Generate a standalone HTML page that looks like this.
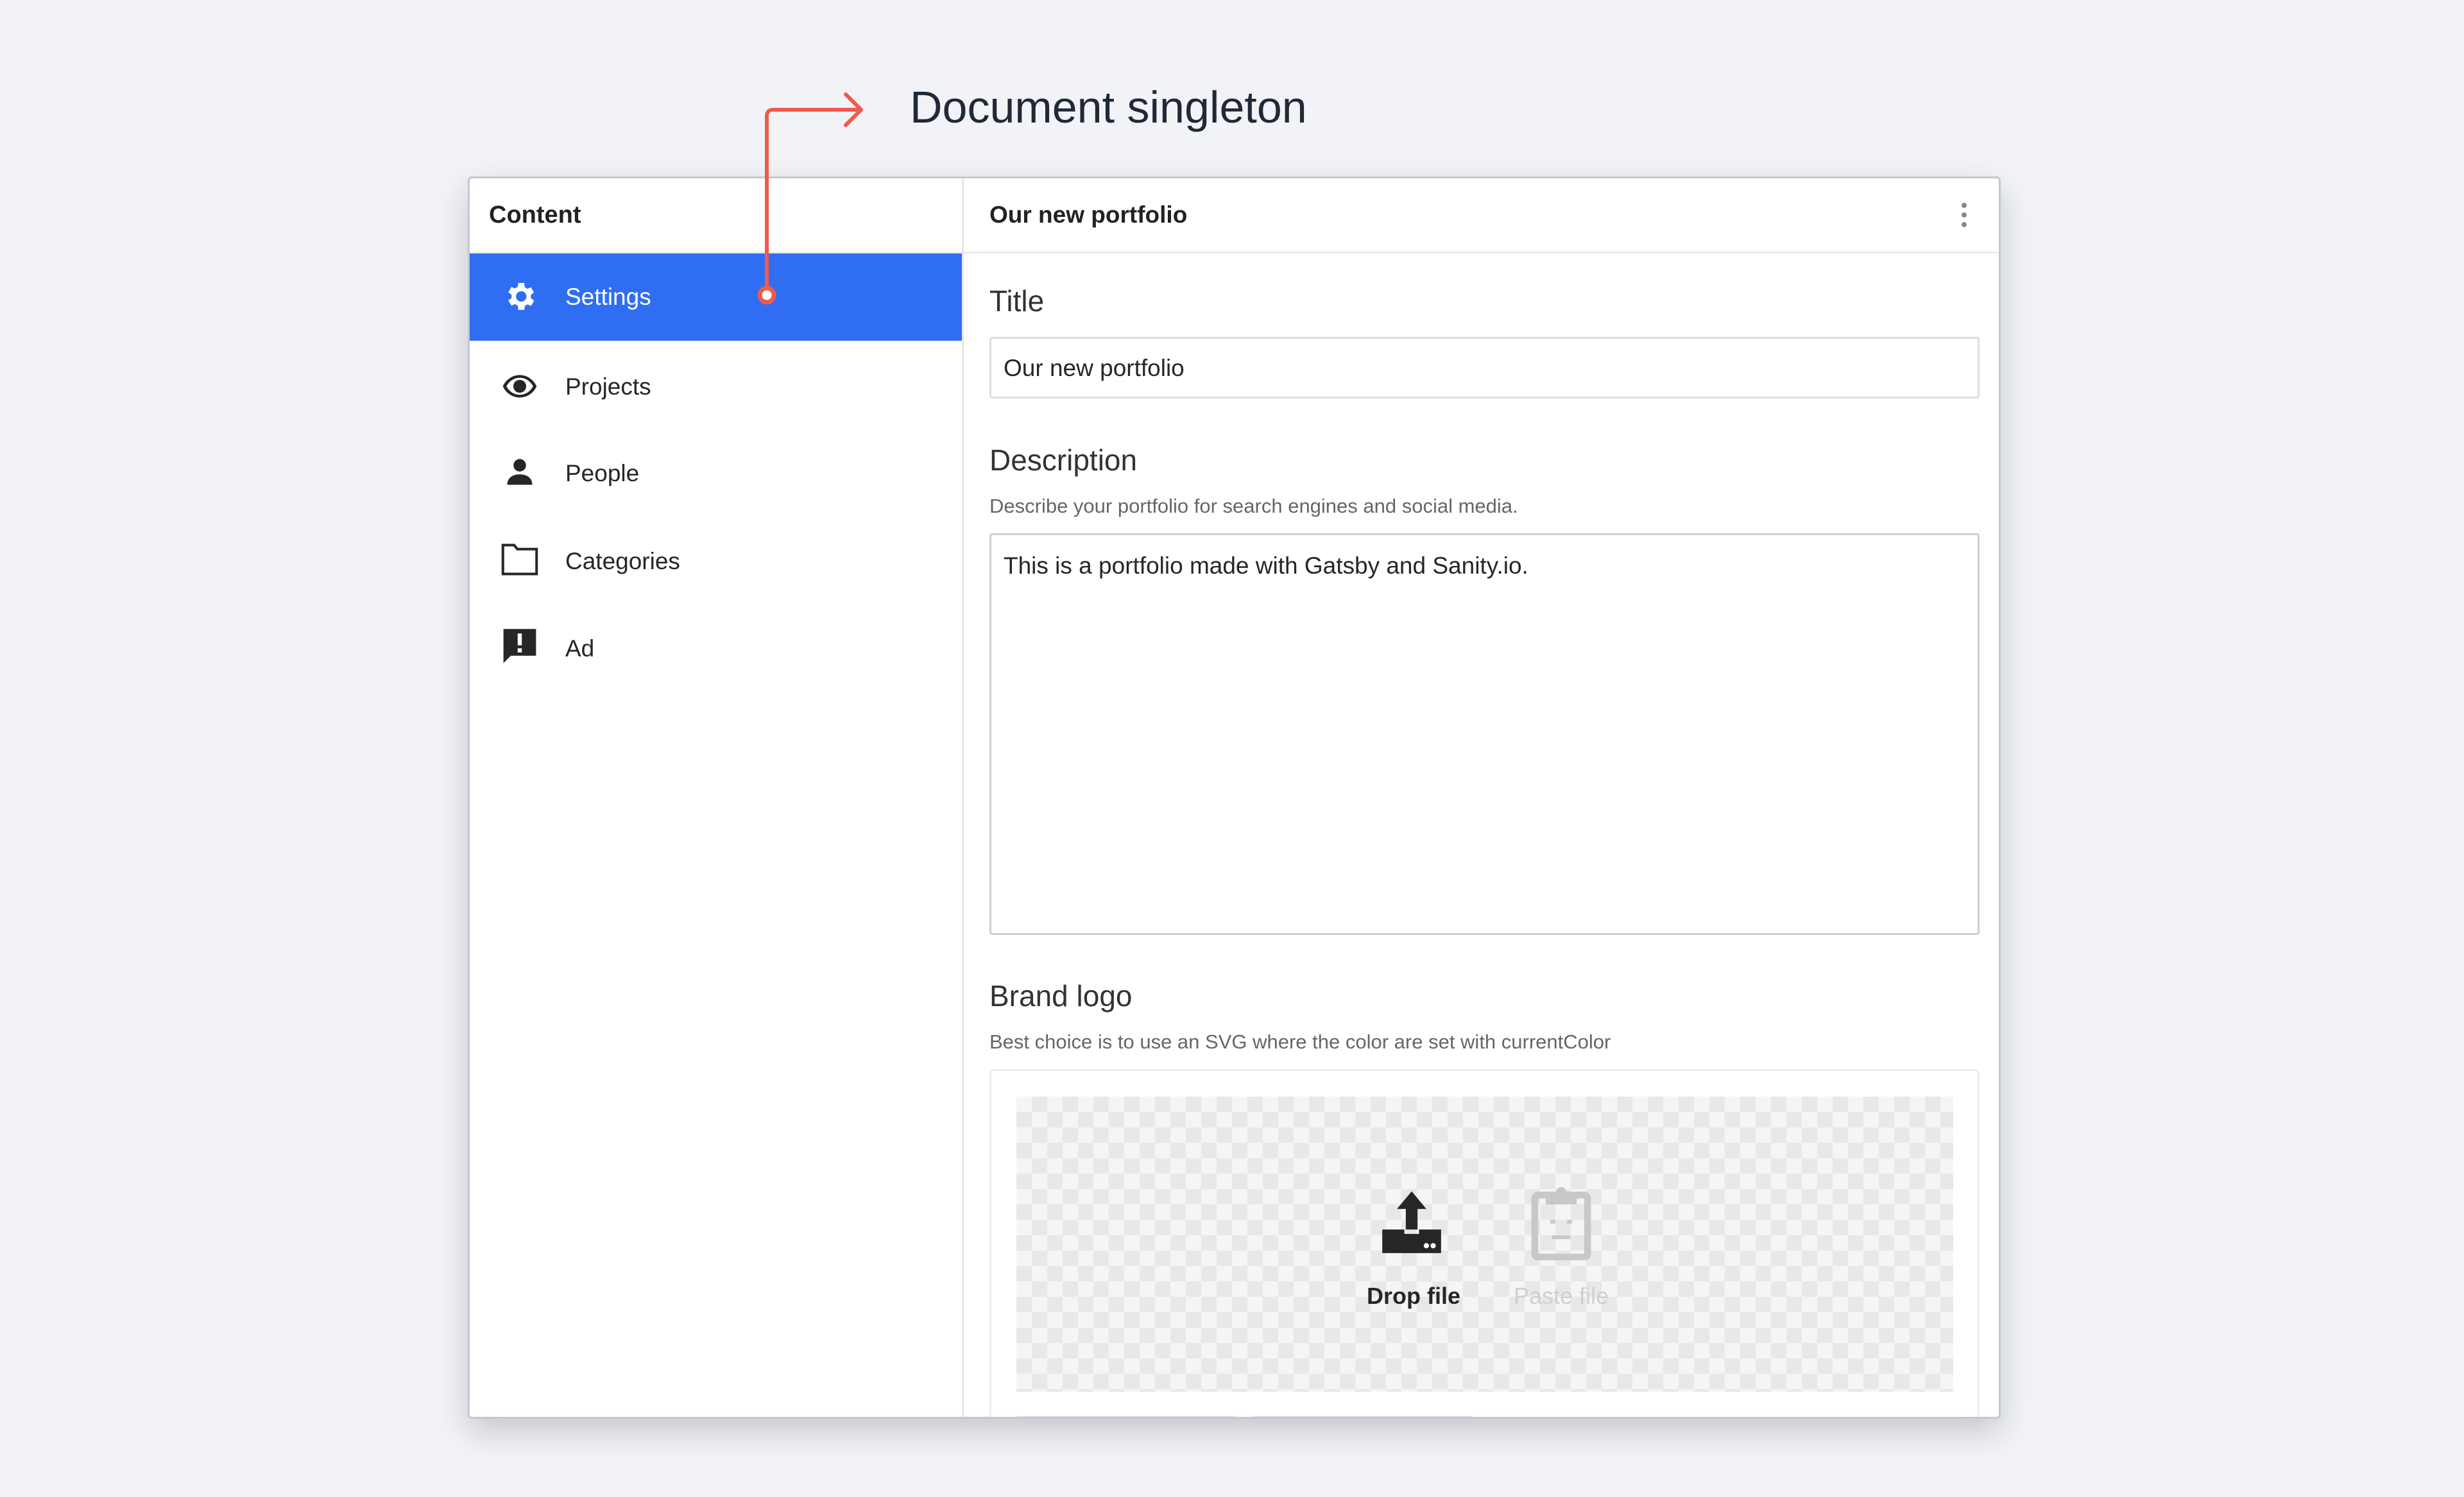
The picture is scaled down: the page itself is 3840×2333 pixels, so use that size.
<!DOCTYPE html>
<html><head><meta charset="utf-8"><style>
*{box-sizing:border-box;margin:0;padding:0}
body{width:3840px;height:2333px;background:#f1f3f7;font-family:"Liberation Sans",Arial,sans-serif;position:relative;overflow:hidden;color:#262626}
.abs{position:absolute}
.frame{left:729px;top:275px;width:2389px;height:1936px;background:#fff;border:3px solid #c3c9d3;border-radius:6px;box-shadow:0 20px 50px rgba(0,0,0,.18);overflow:hidden}
.t{position:absolute;white-space:nowrap;line-height:1}
</style></head><body>
<div class="t" style="left:1418px;top:132px;font-size:70px;color:#1f2937">Document singleton</div>
<div class="abs frame">
  <div class="abs" style="left:767px;top:0;width:3px;height:1936px;background:#e6e6e6"></div>
  <div class="abs" style="left:0;top:114px;width:767px;height:3px;background:#ececec"></div>
  <div class="abs" style="left:770px;top:114px;width:1620px;height:3px;background:#ececec"></div>
  <div class="t" style="left:30px;top:38px;font-size:38px;font-weight:bold;color:#222">Content</div>
  <div class="t" style="left:810px;top:38px;font-size:37px;font-weight:bold;color:#222">Our new portfolio</div>
  <svg class="abs" style="left:2322px;top:36px" width="14" height="44"><circle cx="7" cy="6" r="4" fill="#888"/><circle cx="7" cy="21" r="4" fill="#888"/><circle cx="7" cy="36" r="4" fill="#888"/></svg>
  <div class="abs" style="left:0;top:117px;width:767px;height:136px;background:#2f6ef2"></div>
  <svg class="abs" style="left:50px;top:156px" width="56" height="56" viewBox="0 0 24 24"><path fill="#fff" d="M19.4 13a7.5 7.5 0 000-2l2.1-1.6-2-3.5-2.5 1a7 7 0 00-1.7-1L15 3h-4l-.4 2.7a7 7 0 00-1.7 1l-2.5-1-2 3.5L6.6 11a7.5 7.5 0 000 2l-2.2 1.6 2 3.5 2.5-1a7 7 0 001.7 1L11 21h4l.4-2.7a7 7 0 001.7-1l2.5 1 2-3.5zM13 15.5a3.5 3.5 0 110-7 3.5 3.5 0 010 7z"/></svg>
  <div class="t" style="left:149px;top:166px;font-size:37px;color:#fff">Settings</div>
  <svg class="abs" style="left:48px;top:294px" width="60" height="60" viewBox="0 0 24 24"><path fill="#262626" d="M12 5C6.5 5 2.7 9 1.5 12c1.2 3 5 7 10.5 7s9.3-4 10.5-7C21.3 9 17.5 5 12 5zm0 12.3c-4 0-7-2.7-8.3-5.3C5 9.4 8 6.7 12 6.7S19 9.4 20.3 12C19 14.6 16 17.3 12 17.3zM12 8a4 4 0 100 8 4 4 0 000-8z"/></svg>
  <div class="t" style="left:149px;top:306px;font-size:37px">Projects</div>
  <svg class="abs" style="left:52px;top:432px" width="52" height="52" viewBox="0 0 24 24"><circle cx="12" cy="7" r="4.5" fill="#262626"/><path fill="#262626" d="M3 21c0-5 4-7.5 9-7.5s9 2.5 9 7.5z"/></svg>
  <div class="t" style="left:149px;top:441px;font-size:37px">People</div>
  <svg class="abs" style="left:48px;top:566px" width="60" height="56" viewBox="0 0 24 22"><path fill="none" stroke="#262626" stroke-width="1.6" d="M1.5 2h7l2 2.5h12v15.5h-21z"/></svg>
  <div class="t" style="left:149px;top:578px;font-size:37px">Categories</div>
  <svg class="abs" style="left:50px;top:700px" width="56" height="60" viewBox="0 0 24 26"><path fill="#262626" d="M1 1h22v18H6l-5 5z"/><rect x="10.6" y="4" width="2.8" height="8" fill="#fff"/><rect x="10.6" y="14" width="2.8" height="2.8" fill="#fff"/></svg>
  <div class="t" style="left:149px;top:714px;font-size:37px">Ad</div>

  <div class="t" style="left:810px;top:168px;font-size:46px;color:#333">Title</div>
  <div class="abs" style="left:810px;top:247px;width:1543px;height:96px;border:3px solid #dedede;border-radius:4px"></div>
  <div class="t" style="left:832px;top:277px;font-size:37px">Our new portfolio</div>
  <div class="t" style="left:810px;top:416px;font-size:46px;color:#333">Description</div>
  <div class="t" style="left:810px;top:495px;font-size:31px;color:#666">Describe your portfolio for search engines and social media.</div>
  <div class="abs" style="left:810px;top:553px;width:1543px;height:626px;border:3px solid #cfcfcf;border-radius:4px"></div>
  <div class="t" style="left:832px;top:585px;font-size:37px">This is a portfolio made with Gatsby and Sanity.io.</div>
  <div class="t" style="left:810px;top:1251px;font-size:46px;color:#333">Brand logo</div>
  <div class="t" style="left:810px;top:1330px;font-size:31px;color:#666">Best choice is to use an SVG where the color are set with currentColor</div>
  <div class="abs" style="left:810px;top:1388px;width:1543px;height:600px;border:3px solid #ececec;border-radius:8px"></div>
  <div class="abs" style="left:852px;top:1431px;width:1460px;height:460px;background-color:#f5f5f5;background-image:linear-gradient(45deg,#e8e8e8 25%,transparent 25%,transparent 75%,#e8e8e8 75%),linear-gradient(45deg,#e8e8e8 25%,transparent 25%,transparent 75%,#e8e8e8 75%);background-size:48px 48px;background-position:0 0,24px 24px"></div>
  <svg class="abs" style="left:1413px;top:1574px" width="110" height="110" viewBox="0 0 24 24"><path fill="#262626" d="M12 1l5 6h-3v7h-4V7H7z"/><path fill="#262626" d="M2 14h7.5v1.5h5V14H22v8H2z"/><circle cx="17" cy="19.5" r=".9" fill="#fff"/><circle cx="19.3" cy="19.5" r=".9" fill="#fff"/></svg>
  <div class="t" style="left:1398px;top:1724px;width:138px;text-align:center;font-size:36px;font-weight:bold;color:#262626">Drop file</div>
  <svg class="abs" style="left:1651px;top:1570px" width="100" height="116" viewBox="0 0 20 24"><rect x="1.5" y="3" width="17" height="20" rx="1" fill="none" stroke="#c8c8c8" stroke-width="2.2"/><rect x="5" y="2" width="10" height="4" fill="#c8c8c8"/><circle cx="10" cy="2" r="1.6" fill="#c8c8c8"/><rect x="6.5" y="11" width="1.6" height="1.2" fill="#c8c8c8"/><rect x="11.9" y="11" width="1.6" height="1.2" fill="#c8c8c8"/><rect x="7" y="16" width="6" height="1.2" fill="#c8c8c8"/></svg>
  <div class="t" style="left:1622px;top:1724px;width:158px;text-align:center;font-size:36px;color:#cfcfcf">Paste file</div>
  <div class="abs" style="left:852px;top:1929px;width:340px;height:6px;background:#e2e2e2"></div>
  <div class="abs" style="left:1222px;top:1929px;width:340px;height:6px;background:#e2e2e2"></div>
</div>
<svg class="abs" style="left:0;top:0" width="3840" height="600">
  <path d="M1195 460V181q0-10 10-10H1340" fill="none" stroke="#ef5a4c" stroke-width="6"/>
  <path d="M1318 147l24 24-24 24" fill="none" stroke="#ef5a4c" stroke-width="6" stroke-linecap="round" stroke-linejoin="round"/>
  <circle cx="1195" cy="460" r="11" fill="#fff" stroke="#ef5a4c" stroke-width="7"/>
</svg>
</body></html>
